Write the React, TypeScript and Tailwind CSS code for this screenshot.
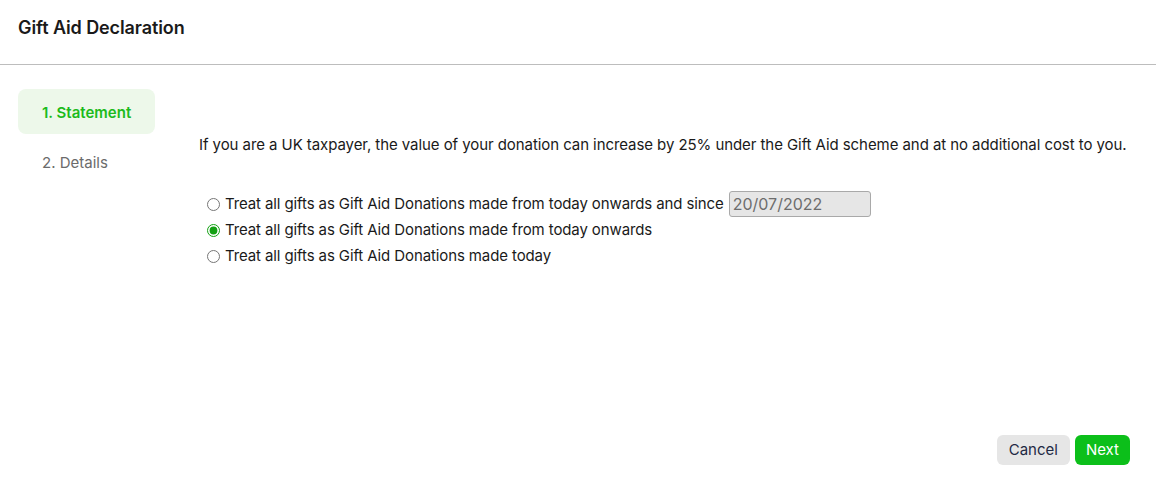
import { useState } from 'react';

const options = [
  { id: 'since', label: 'Treat all gifts as Gift Aid Donations made from today onwards and since' },
  { id: 'onwards', label: 'Treat all gifts as Gift Aid Donations made from today onwards' },
  { id: 'today', label: 'Treat all gifts as Gift Aid Donations made today' },
];

export default function App() {
  const [choice, setChoice] = useState('onwards');

  return (
    <div className="h-[482px] w-full bg-white font-['Inter',sans-serif] text-[#1a1a1a]">
      <header className="h-[65px] border-b border-[#bdbdbd] px-[18px] pt-[14px]">
        <h1 className="text-[18px] font-semibold tracking-[-0.1px]">Gift Aid Declaration</h1>
      </header>

      <div className="flex h-[417px]">
        <nav className="flex w-[199px] shrink-0 flex-col gap-[5px] pl-[18px] pt-[24px]">
          <div className="flex h-[45px] w-[137px] items-center rounded-lg bg-[#edf8ea] pl-[24px] pt-[3px] text-[15px] font-semibold text-[#1cbb1c]">
            1. Statement
          </div>
          <div className="flex h-[45px] items-center pl-[24px] pt-[3px] text-[15px] text-[#6b6b6b]">2. Details</div>
        </nav>

        <main className="flex flex-1 flex-col pr-[20px] pt-[69px]">
          <p className="whitespace-nowrap text-[15px] leading-[22px] tracking-[-0.07px]">
            If you are a UK taxpayer, the value of your donation can increase by 25% under the Gift Aid scheme and at no additional cost to you.
          </p>

          <div className="mt-[35px] flex flex-col pl-[8px] text-[15px] tracking-[-0.11px]">
            {options.map((opt) => (
              <label key={opt.id} className="flex h-[26px] items-center">
                <input
                  type="radio"
                  name="giftaid"
                  checked={choice === opt.id}
                  onChange={() => setChoice(opt.id)}
                  className="mr-[5px] h-[13px] w-[13px] accent-[#12a012]"
                />
                <span>{opt.label}</span>
                {opt.id === 'since' && (
                  <input
                    type="text"
                    disabled
                    value="20/07/2022"
                    className="ml-[5px] h-[26px] w-[142px] rounded-[3px] border border-[#a9a9a9] bg-[#e6e6e6] px-[3px] font-['Inter',sans-serif] text-[16px] tracking-normal text-[#6d6d6d]"
                  />
                )}
              </label>
            ))}
          </div>

          <div className="mt-auto mb-[17px] flex justify-end gap-[5px] pr-[6px]">
            <button className="h-[30px] rounded-md bg-[#e6e6e6] px-[12px] text-[15px] text-[#1f2a44]">Cancel</button>
            <button className="h-[30px] rounded-md bg-[#0cbf1a] px-[11px] text-[15px] text-white">Next</button>
          </div>
        </main>
      </div>
    </div>
  );
}
